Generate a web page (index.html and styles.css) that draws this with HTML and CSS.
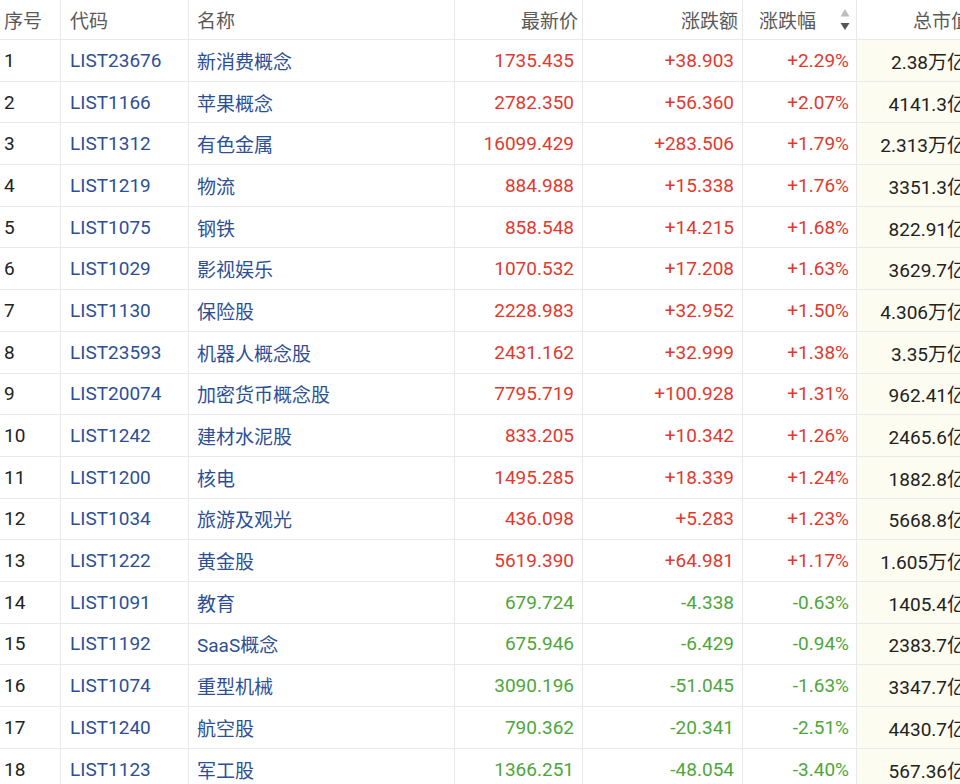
FILE: index.html
```html
<!DOCTYPE html>
<html lang="zh-CN">
<head>
<meta charset="utf-8">
<title>板块行情</title>
<link rel="stylesheet" href="styles.css">
</head>
<body>
<div class="table">
  <div class="row head">
    <div class="cell c-idx">序号</div>
    <div class="cell c-code">代码</div>
    <div class="cell c-name">名称</div>
    <div class="cell c-num h-num">最新价</div>
    <div class="cell c-num h-num">涨跌额</div>
    <div class="cell c-pct h-sort"><span>涨跌幅</span>
      <svg class="sort" width="10" height="22" viewBox="0 0 10 22"><polygon points="5,0 9.5,7.5 0.5,7.5" fill="#bdbdbd"/><polygon points="0.5,14 9.5,14 5,21" fill="#555"/></svg>
    </div>
    <div class="cell c-cap h-num">总市值</div>
  </div>

  <div class="row"><div class="cell c-idx">1</div><div class="cell c-code link">LIST23676</div><div class="cell c-name link">新消费概念</div><div class="cell c-num up">1735.435</div><div class="cell c-num up">+38.903</div><div class="cell c-pct up">+2.29%</div><div class="cell c-cap">2.38万亿</div></div>
  <div class="row"><div class="cell c-idx">2</div><div class="cell c-code link">LIST1166</div><div class="cell c-name link">苹果概念</div><div class="cell c-num up">2782.350</div><div class="cell c-num up">+56.360</div><div class="cell c-pct up">+2.07%</div><div class="cell c-cap">4141.3亿</div></div>
  <div class="row"><div class="cell c-idx">3</div><div class="cell c-code link">LIST1312</div><div class="cell c-name link">有色金属</div><div class="cell c-num up">16099.429</div><div class="cell c-num up">+283.506</div><div class="cell c-pct up">+1.79%</div><div class="cell c-cap">2.313万亿</div></div>
  <div class="row"><div class="cell c-idx">4</div><div class="cell c-code link">LIST1219</div><div class="cell c-name link">物流</div><div class="cell c-num up">884.988</div><div class="cell c-num up">+15.338</div><div class="cell c-pct up">+1.76%</div><div class="cell c-cap">3351.3亿</div></div>
  <div class="row"><div class="cell c-idx">5</div><div class="cell c-code link">LIST1075</div><div class="cell c-name link">钢铁</div><div class="cell c-num up">858.548</div><div class="cell c-num up">+14.215</div><div class="cell c-pct up">+1.68%</div><div class="cell c-cap">822.91亿</div></div>
  <div class="row"><div class="cell c-idx">6</div><div class="cell c-code link">LIST1029</div><div class="cell c-name link">影视娱乐</div><div class="cell c-num up">1070.532</div><div class="cell c-num up">+17.208</div><div class="cell c-pct up">+1.63%</div><div class="cell c-cap">3629.7亿</div></div>
  <div class="row"><div class="cell c-idx">7</div><div class="cell c-code link">LIST1130</div><div class="cell c-name link">保险股</div><div class="cell c-num up">2228.983</div><div class="cell c-num up">+32.952</div><div class="cell c-pct up">+1.50%</div><div class="cell c-cap">4.306万亿</div></div>
  <div class="row"><div class="cell c-idx">8</div><div class="cell c-code link">LIST23593</div><div class="cell c-name link">机器人概念股</div><div class="cell c-num up">2431.162</div><div class="cell c-num up">+32.999</div><div class="cell c-pct up">+1.38%</div><div class="cell c-cap">3.35万亿</div></div>
  <div class="row"><div class="cell c-idx">9</div><div class="cell c-code link">LIST20074</div><div class="cell c-name link">加密货币概念股</div><div class="cell c-num up">7795.719</div><div class="cell c-num up">+100.928</div><div class="cell c-pct up">+1.31%</div><div class="cell c-cap">962.41亿</div></div>
  <div class="row"><div class="cell c-idx">10</div><div class="cell c-code link">LIST1242</div><div class="cell c-name link">建材水泥股</div><div class="cell c-num up">833.205</div><div class="cell c-num up">+10.342</div><div class="cell c-pct up">+1.26%</div><div class="cell c-cap">2465.6亿</div></div>
  <div class="row"><div class="cell c-idx">11</div><div class="cell c-code link">LIST1200</div><div class="cell c-name link">核电</div><div class="cell c-num up">1495.285</div><div class="cell c-num up">+18.339</div><div class="cell c-pct up">+1.24%</div><div class="cell c-cap">1882.8亿</div></div>
  <div class="row"><div class="cell c-idx">12</div><div class="cell c-code link">LIST1034</div><div class="cell c-name link">旅游及观光</div><div class="cell c-num up">436.098</div><div class="cell c-num up">+5.283</div><div class="cell c-pct up">+1.23%</div><div class="cell c-cap">5668.8亿</div></div>
  <div class="row"><div class="cell c-idx">13</div><div class="cell c-code link">LIST1222</div><div class="cell c-name link">黄金股</div><div class="cell c-num up">5619.390</div><div class="cell c-num up">+64.981</div><div class="cell c-pct up">+1.17%</div><div class="cell c-cap">1.605万亿</div></div>
  <div class="row"><div class="cell c-idx">14</div><div class="cell c-code link">LIST1091</div><div class="cell c-name link">教育</div><div class="cell c-num down">679.724</div><div class="cell c-num down">-4.338</div><div class="cell c-pct down">-0.63%</div><div class="cell c-cap">1405.4亿</div></div>
  <div class="row"><div class="cell c-idx">15</div><div class="cell c-code link">LIST1192</div><div class="cell c-name link">SaaS概念</div><div class="cell c-num down">675.946</div><div class="cell c-num down">-6.429</div><div class="cell c-pct down">-0.94%</div><div class="cell c-cap">2383.7亿</div></div>
  <div class="row"><div class="cell c-idx">16</div><div class="cell c-code link">LIST1074</div><div class="cell c-name link">重型机械</div><div class="cell c-num down">3090.196</div><div class="cell c-num down">-51.045</div><div class="cell c-pct down">-1.63%</div><div class="cell c-cap">3347.7亿</div></div>
  <div class="row"><div class="cell c-idx">17</div><div class="cell c-code link">LIST1240</div><div class="cell c-name link">航空股</div><div class="cell c-num down">790.362</div><div class="cell c-num down">-20.341</div><div class="cell c-pct down">-2.51%</div><div class="cell c-cap">4430.7亿</div></div>
  <div class="row"><div class="cell c-idx">18</div><div class="cell c-code link">LIST1123</div><div class="cell c-name link">军工股</div><div class="cell c-num down">1366.251</div><div class="cell c-num down">-48.054</div><div class="cell c-pct down">-3.40%</div><div class="cell c-cap">567.36亿</div></div>
</div>
</body>
</html>
```

FILE: styles.css
```css
html, body {
  margin: 0;
  padding: 0;
  overflow: hidden;
  background: #fff;
}

body {
  font-family: Roboto, "Noto Sans CJK SC", sans-serif;
  font-size: 19px;
  color: #222;
}

.table {
  width: 974px;
}

.row {
  display: grid;
  grid-template-columns: 61px 128px 266px 128px 160px 114px 117px;
  height: 41.7px;
  box-sizing: border-box;
  border-bottom: 1px solid #e9e9e9;
}

.row.head {
  height: 40px;
  color: #5a5a5a;
}

.cell {
  box-sizing: border-box;
  border-right: 1px solid #e9e9e9;
  display: flex;
  align-items: center;
  white-space: nowrap;
  overflow: hidden;
}

.c-idx { padding-left: 4px; }
.c-code { padding-left: 9px; }
.c-name { padding-left: 8px; }

.c-num,
.c-pct,
.c-cap {
  justify-content: flex-end;
  padding-right: 8px;
}

.c-pct { padding-right: 7px; }

.c-cap {
  background: #fcfcf1;
  border-right: none;
}

.head .c-cap {
  background: #fff;
}

.h-num { padding-right: 4px; }

.h-sort {
  justify-content: space-between;
  padding-left: 16px;
  padding-right: 6px;
}

.sort { display: block; }

.link { color: #2d4f96; }
.up { color: #de3a30; }
.down { color: #4ea63b; }
```
